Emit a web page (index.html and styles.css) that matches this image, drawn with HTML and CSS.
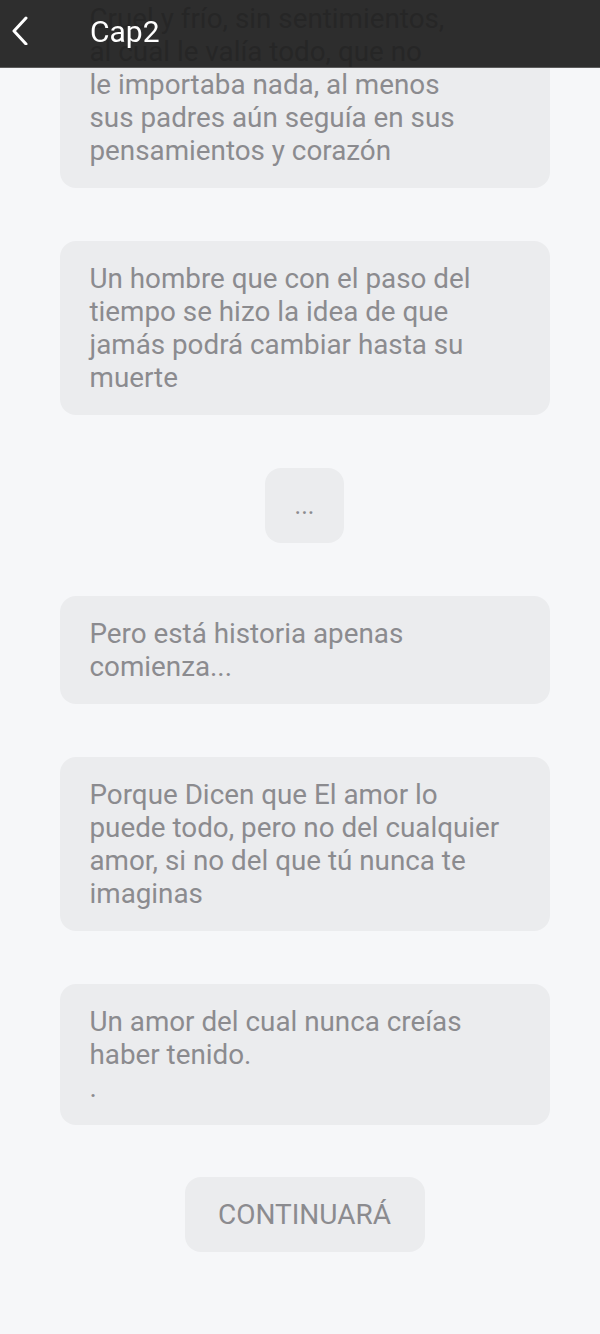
FILE: index.html
```html
<!DOCTYPE html>
<html lang="es">
<head>
    <meta charset="UTF-8">
    <meta name="viewport" content="width=device-width, initial-scale=1.0">
    <title>Cap2</title>
    <link rel="stylesheet" href="styles.css">
</head>
<body>
    <!-- Top bar sits over the scrolled story -->
    <header class="top-bar">
        <button class="back-btn" aria-label="Volver">
            <svg width="30" height="30" viewBox="0 0 30 30">
                <polyline points="20,3 8,16 20,29" fill="none" stroke="#fff" stroke-width="3" stroke-linecap="round" stroke-linejoin="round"/>
            </svg>
        </button>
        <div class="title">Cap2</div>
    </header>

    <main class="story">
        <div class="bubble">
            Cruel y frío, sin sentimientos,<br>
            al cual le valía todo, que no<br>
            le importaba nada, al menos<br>
            sus padres aún seguía en sus<br>
            pensamientos y corazón
        </div>

        <div class="bubble">
            Un hombre que con el paso del<br>
            tiempo se hizo la idea de que<br>
            jamás podrá cambiar hasta su<br>
            muerte
        </div>

        <div class="bubble small">...</div>

        <div class="bubble">
            Pero está historia apenas<br>
            comienza...
        </div>

        <div class="bubble">
            Porque Dicen que El amor lo<br>
            puede todo, pero no del cualquier<br>
            amor, si no del que tú nunca te<br>
            imaginas
        </div>

        <div class="bubble">
            Un amor del cual nunca creías<br>
            haber tenido.<br>
            .
        </div>

        <div class="bubble small end">CONTINUARÁ</div>
    </main>
</body>
</html>
```

FILE: styles.css
```css
body {
    margin: 0;
    background-color: #f6f7f9;
    font-family: Roboto, "Noto Sans", sans-serif;
    overflow: hidden;
}

.top-bar {
    position: fixed;
    top: 0;
    left: 0;
    right: 0;
    height: 67px;
    display: flex;
    align-items: center;
    background-color: rgba(30, 30, 30, 0.93);
    border-bottom: 1px solid #5c5c5c;
    z-index: 10;
}

.back-btn {
    width: 90px;
    height: 67px;
    padding: 0 0 8px 6px;
    border: none;
    background: none;
    display: flex;
    align-items: center;
}

.title {
    color: #ffffff;
    font-size: 30px;
    margin-bottom: 5px;
}

.story {
    display: flex;
    flex-direction: column;
    align-items: center;
    gap: 53px;
    margin-top: -19px; /* page is scrolled a little */
    padding: 0 0 80px 9px;
}

.bubble {
    box-sizing: border-box;
    width: 490px;
    padding: 21px 20px 21px 30px;
    background-color: #ebecee;
    border-radius: 16px;
    color: #8b8b8f;
    font-size: 27.8px;
    line-height: 33px;
    white-space: nowrap;
}

.bubble.small {
    width: auto;
    padding: 21px 30px;
    font-size: 25px;
}

.bubble.end {
    width: 240px;
    text-align: center;
    font-size: 28px;
    margin-top: -1px;
}
```
